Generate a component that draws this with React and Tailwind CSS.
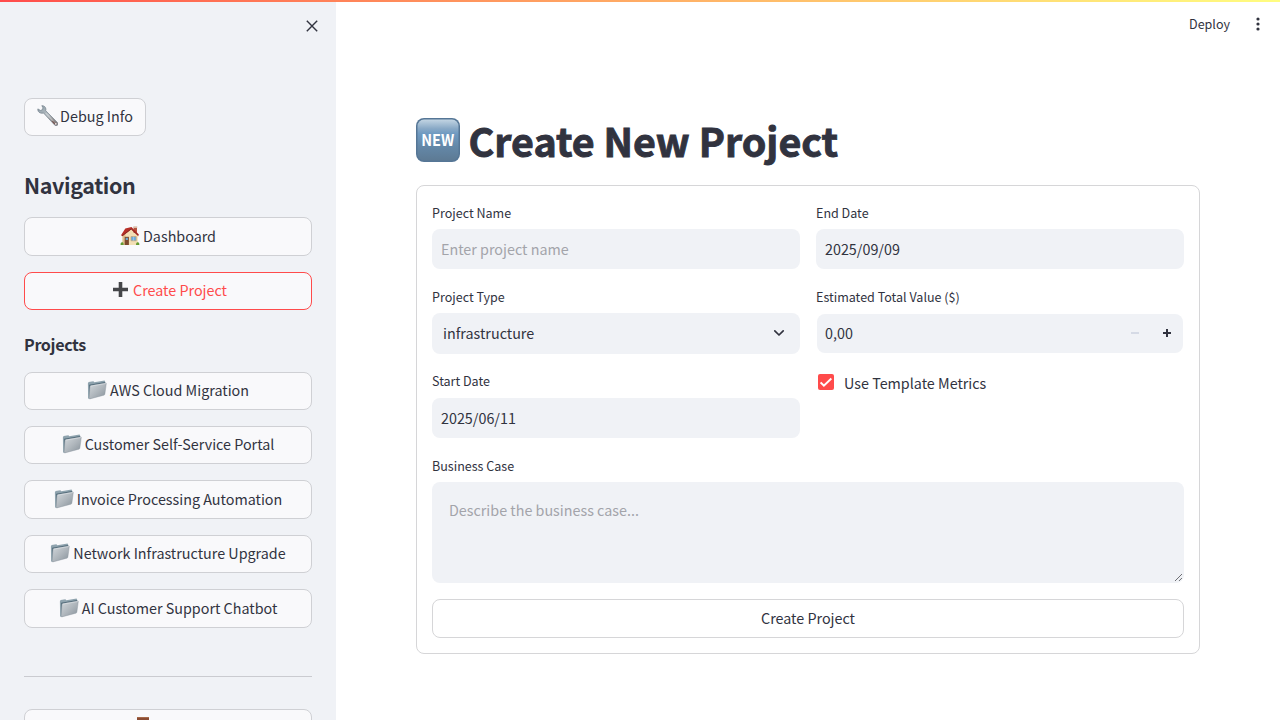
import React from "react";

const ids = { wrench: "wrench-g", folder: "folder-g", sign: "sign-g" };

function Wrench() {
  return (
    <svg className="h-[21px] w-[21px] shrink-0" viewBox="0 0 20 20">
      <defs>
        <linearGradient id={ids.wrench} x1="0" y1="0" x2="1" y2="1">
          <stop offset="0" stopColor="#8fa0aa" />
          <stop offset="0.5" stopColor="#b4bbc0" />
          <stop offset="0.8" stopColor="#8a8583" />
          <stop offset="1" stopColor="#7c6f70" />
        </linearGradient>
      </defs>
      <path d="M4.600.6c2.200-.1 3.900 1.500 3.900 3.500 0 .5-.1.900-.2 1.300l10.900 11c.9 1 .9 2.200.2 2.900-.8.700-2 .5-2.800-.4L6.200 7.600c-1.900.7-4.100 0-5-1.600C.8 5.200.7 4.400.8 3.700l2.600 1.500 1.900-.9.300-1.700z" fill={`url(#${ids.wrench})`} stroke="#687681" strokeWidth=".6" />
      <path d="M8.200 7.600l7 7.300" stroke="#dfe3e5" strokeWidth=".7" />
      <path d="M14.500 15.500l2.500 2.700" stroke="#7a4540" strokeWidth=".9" />
      <circle cx="17.900" cy="17.900" r=".8" fill="#f0e8e8" />
    </svg>
  );
}

function House() {
  return (
    <svg className="h-5 w-5 shrink-0" viewBox="0 0 20 20">
      <path d="M2.500 9.500L5.500 4 13 3l4.800 6V19h-15.300z" fill="#f3dfb5" />
      <path d="M2.500 9.500L5.500 6V19h-3z" fill="#dfc08f" />
      <path d="M13.600.8h3.400V7h-3.400z" fill="#b5523c" />
      <path d="M13.300.4h4v1.500h-4z" fill="#dcc9b5" />
      <path d="M1 9.300L5.300 2.600 11.500 1 18.900 8.600l-.8 1.300L11.200 3.600 2.500 10.300z" fill="#b72f27" />
      <path d="M2 9.800l9.300-6.900 7 6.700" fill="none" stroke="#7e2725" strokeWidth=".8" />
      <path d="M4.700 10.800h4.200V19H4.700z" fill="#7e492d" />
      <path d="M5.700 11.800h2.200v2.200H5.700z" fill="#68a9d5" />
      <path d="M11 10.500h5.200v4.300H11z" fill="#6aabe0" stroke="#c5a474" strokeWidth=".7" />
      <path d="M13.600 10.500v4.300" stroke="#b6d6e8" strokeWidth=".6" />
      <path d="M.6 19c-.3-2 .7-3 1.800-2.700 1 .2 1.400 1.300 1.200 2.700zM16 19c0-2 .8-3 1.900-2.700 1.200.3 1.700 1.400 1.400 2.700z" fill="#649b32" />
    </svg>
  );
}

function Plus() {
  return (
    <svg className="h-5 w-5 shrink-0" viewBox="0 0 20 20">
      <path d="M8.700 2h3.600v5.700H18v3.600h-5.700V17H8.700v-5.700H3V7.700h5.700z" fill="#454649" />
    </svg>
  );
}

function Folder() {
  return (
    <svg className="h-5 w-5 shrink-0" viewBox="0 0 20 20">
      <defs>
        <linearGradient id={ids.folder} x1="0" y1="0" x2="1" y2="1">
          <stop offset="0" stopColor="#d3d8dc" />
          <stop offset="0.500" stopColor="#b0b7bd" />
          <stop offset="1" stopColor="#87919a" />
        </linearGradient>
      </defs>
      <path d="M.9 3.300l.7-1.300 4.800-.700.9.900 10.300-1.600.9 1.800L3.400 19l-2.300-.6z" fill="#8fa3ae" />
      <path d="M2.200 4.800l15.900-2.800-.3 2.200L2.600 18z" fill="#4c6675" />
      <path d="M3 6.500Q3.100 5.600 4 5.400L18.600 2.900q.8-.1.700.7L17.900 14q-.1.900-1 1.200L2.900 18.900q-.9.200-.8-.8z" fill={`url(#${ids.folder})`} stroke="#8a969e" strokeWidth=".4" />
      <path d="M3.500 6.100l15.200-2.600" stroke="#e5eaed" strokeWidth=".6" />
    </svg>
  );
}

function NewSign() {
  return (
    <svg className="h-11 w-11 shrink-0" viewBox="0 0 44 44">
      <defs>
        <linearGradient id={ids.sign} x1="0" y1="0" x2="0" y2="1">
          <stop offset="0" stopColor="#c3d5e3" />
          <stop offset="0.220" stopColor="#89a9c6" />
          <stop offset="0.350" stopColor="#6f9ac1" />
          <stop offset="0.650" stopColor="#6488a8" />
          <stop offset="1" stopColor="#5d7a94" />
        </linearGradient>
      </defs>
      <rect width="44" height="44" rx="8" fill="#557696" />
      <rect x="1.500" y="1.500" width="41" height="41" rx="6.500" fill={`url(#${ids.sign})`} />
      <text x="21.700" y="28.300" textAnchor="middle" textLength="33" lengthAdjust="spacingAndGlyphs" fontSize="16" fontWeight="700" fill="#fff" fontFamily="Noto Sans CJK SC, sans-serif">NEW</text>
    </svg>
  );
}

function SideButton({ icon, children, active }) {
  return (
    <button className={`flex h-[38.400px] w-full shrink-0 items-center justify-center rounded-lg border bg-[#f9f9fb] pb-[1.500px] ${active ? "gap-[3px] border-[#ff4b4b] pl-px text-[#ff4b4b]" : "gap-[3px] border-[#cfd0d4]"}`}>
      {icon}
      <span>{children}</span>
    </button>
  );
}

function Label({ children }) {
  return <div className="h-7 pt-[2px] text-[12.540px] leading-5">{children}</div>;
}

const projects = [
  "AWS Cloud Migration",
  "Customer Self-Service Portal",
  "Invoice Processing Automation",
  "Network Infrastructure Upgrade",
  "AI Customer Support Chatbot",
];

export default function App() {
  return (
    <div className="relative flex h-[720px] w-[1280px] overflow-hidden bg-white font-['Noto_Sans_CJK_SC',sans-serif] text-[14.330px] leading-6 text-[#31333f]">
      <div className="absolute inset-x-0 top-0 z-10 h-[2px] bg-linear-to-r from-[#ff4b4b] to-[#fffd80]" />
      <aside className="flex w-[336px] shrink-0 flex-col bg-[#f0f2f6] px-6">
        <div className="-mr-[6px] flex h-[98px] shrink-0 justify-end pt-5">
          <svg className="h-3 w-3" viewBox="0 0 12 12" stroke="#31333f" strokeWidth="1.400"><path d="M.8.8l10.400 10.400M11.200.8L.8 11.200" /></svg>
        </div>
        <button className="flex h-[38px] w-[122px] shrink-0 items-center justify-center gap-[2px] rounded-lg border border-[#cfd0d4] bg-[#f9f9fb] pb-[3px]">
          <Wrench />
          <span>Debug Info</span>
        </button>
        <h2 className="mt-[33px] h-[48.400px] shrink-0 text-[21.500px] leading-8 font-semibold tracking-[-0.380px]">Navigation</h2>
        <nav className="flex shrink-0 flex-col gap-4">
          <SideButton icon={<House />}>Dashboard</SideButton>
          <SideButton icon={<Plus />} active>Create Project</SideButton>
        </nav>
        <h3 className="mt-[22px] h-[39.400px] shrink-0 text-[16.100px] leading-6 font-semibold tracking-[-0.350px]">Projects</h3>
        <nav className="flex shrink-0 flex-col gap-4">
          {projects.map((p) => <SideButton key={p} icon={<Folder />}>{p}</SideButton>)}
        </nav>
        <hr className="mt-12 mb-8 shrink-0 border-[#cacbd0]" />
        <button className="flex h-[39px] w-full shrink-0 items-start justify-center rounded-lg border border-[#cfd0d4] bg-[#f9f9fb] pt-[7px] pr-[51px]">
          <svg className="h-5 w-3" viewBox="0 0 12 20"><path d="M0 0h12v20H0z" fill="#8a4b32" /><path d="M0 0h12v1H0z" fill="#a5694a" /></svg>
        </button>
      </aside>
      <main className="flex grow flex-col">
        <header className="flex h-12 shrink-0 items-center justify-end pr-[19px] text-[12.540px]">
          <span>Deploy</span>
          <svg className="ml-[25px] h-4 w-[6px]" viewBox="0 0 6 16" fill="#31333f"><circle cx="3" cy="3" r="1.600" /><circle cx="3" cy="8" r="1.600" /><circle cx="3" cy="13" r="1.600" /></svg>
        </header>
        <h1 className="mx-20 flex h-[137px] shrink-0 items-start gap-[8.500px] pt-[70px]">
          <NewSign />
          <span className="-mt-[2px] text-[39.400px] leading-[48px] font-bold [-webkit-text-stroke:0.900px_#31333f]">Create New Project</span>
        </h1>
        <form className="mx-20 flex h-[469px] shrink-0 flex-col rounded-lg border border-[#d6d6d8] p-[15px]">
          <div className="flex gap-4">
            <div className="flex-1">
              <Label>Project Name</Label>
              <div className="mb-4 flex h-10 items-center rounded-lg bg-[#f0f2f6] px-[9px] text-[#a3a4aa]">Enter project name</div>
              <Label>Project Type</Label>
              <div className="mb-[15px] flex h-[41px] items-center justify-between rounded-lg bg-[#f0f2f6] pr-[15px] pb-[2px] pl-[11px]">
                <span>infrastructure</span>
                <svg className="h-3 w-3" viewBox="0 0 12 12" fill="none" stroke="#31333f" strokeWidth="1.700" strokeLinecap="round" strokeLinejoin="round"><path d="M1.800 3.800L6 8l4.200-4.200" /></svg>
              </div>
              <Label>Start Date</Label>
              <div className="mt-[1px] mb-4 flex h-10 items-center rounded-lg bg-[#f0f2f6] px-[9px]">2025/06/11</div>
            </div>
            <div className="flex-1">
              <Label>End Date</Label>
              <div className="mb-4 flex h-10 items-center rounded-lg bg-[#f0f2f6] px-[9px]">2025/09/09</div>
              <Label>Estimated Total Value ($)</Label>
              <div className="mx-px mt-[1px] mb-[21px] flex h-[39px] items-center rounded-lg bg-[#f0f2f6] pr-3 pb-px pl-2">
                <span className="grow">0,00</span>
                <svg className="h-2 w-2" viewBox="0 0 8 8"><path d="M0 3h8v2H0z" fill="#d5dae5" /></svg>
                <svg className="ml-6 h-2 w-2" viewBox="0 0 8 8"><path d="M3 0h2v3h3v2H5v3H3V5H0V3h3z" fill="#31333f" /></svg>
              </div>
              <div className="flex items-start">
                <span className="ml-[2px] flex h-4 w-4 items-center justify-center rounded-[2px] bg-[#ff4b4b]">
                  <svg className="h-3 w-3" viewBox="0 0 12 12" fill="none" stroke="#fff" strokeWidth="2"><path d="M.6 6.500l3.300 3.200L11.400 2.500" /></svg>
                </span>
                <span className="-mt-[3px] ml-[10px]">Use Template Metrics</span>
              </div>
            </div>
          </div>
          <Label>Business Case</Label>
          <div className="mb-4 flex h-[101px] shrink-0 items-end rounded-lg bg-[#f0f2f6] pl-[17px]">
            <span className="grow self-start pt-4 text-[#a3a4aa]">Describe the business case...</span>
            <svg className="mr-[2px] mb-[2px] h-[7px] w-[7px]" viewBox="0 0 8 8" stroke="#4a4b50" strokeWidth=".9"><path d="M0 8L8 0M4.500 8L8 4.500" /></svg>
          </div>
          <button type="button" className="flex h-[39px] shrink-0 items-center justify-center rounded-lg border border-[#d6d6d8] bg-white pb-px">Create Project</button>
        </form>
      </main>
    </div>
  );
}
